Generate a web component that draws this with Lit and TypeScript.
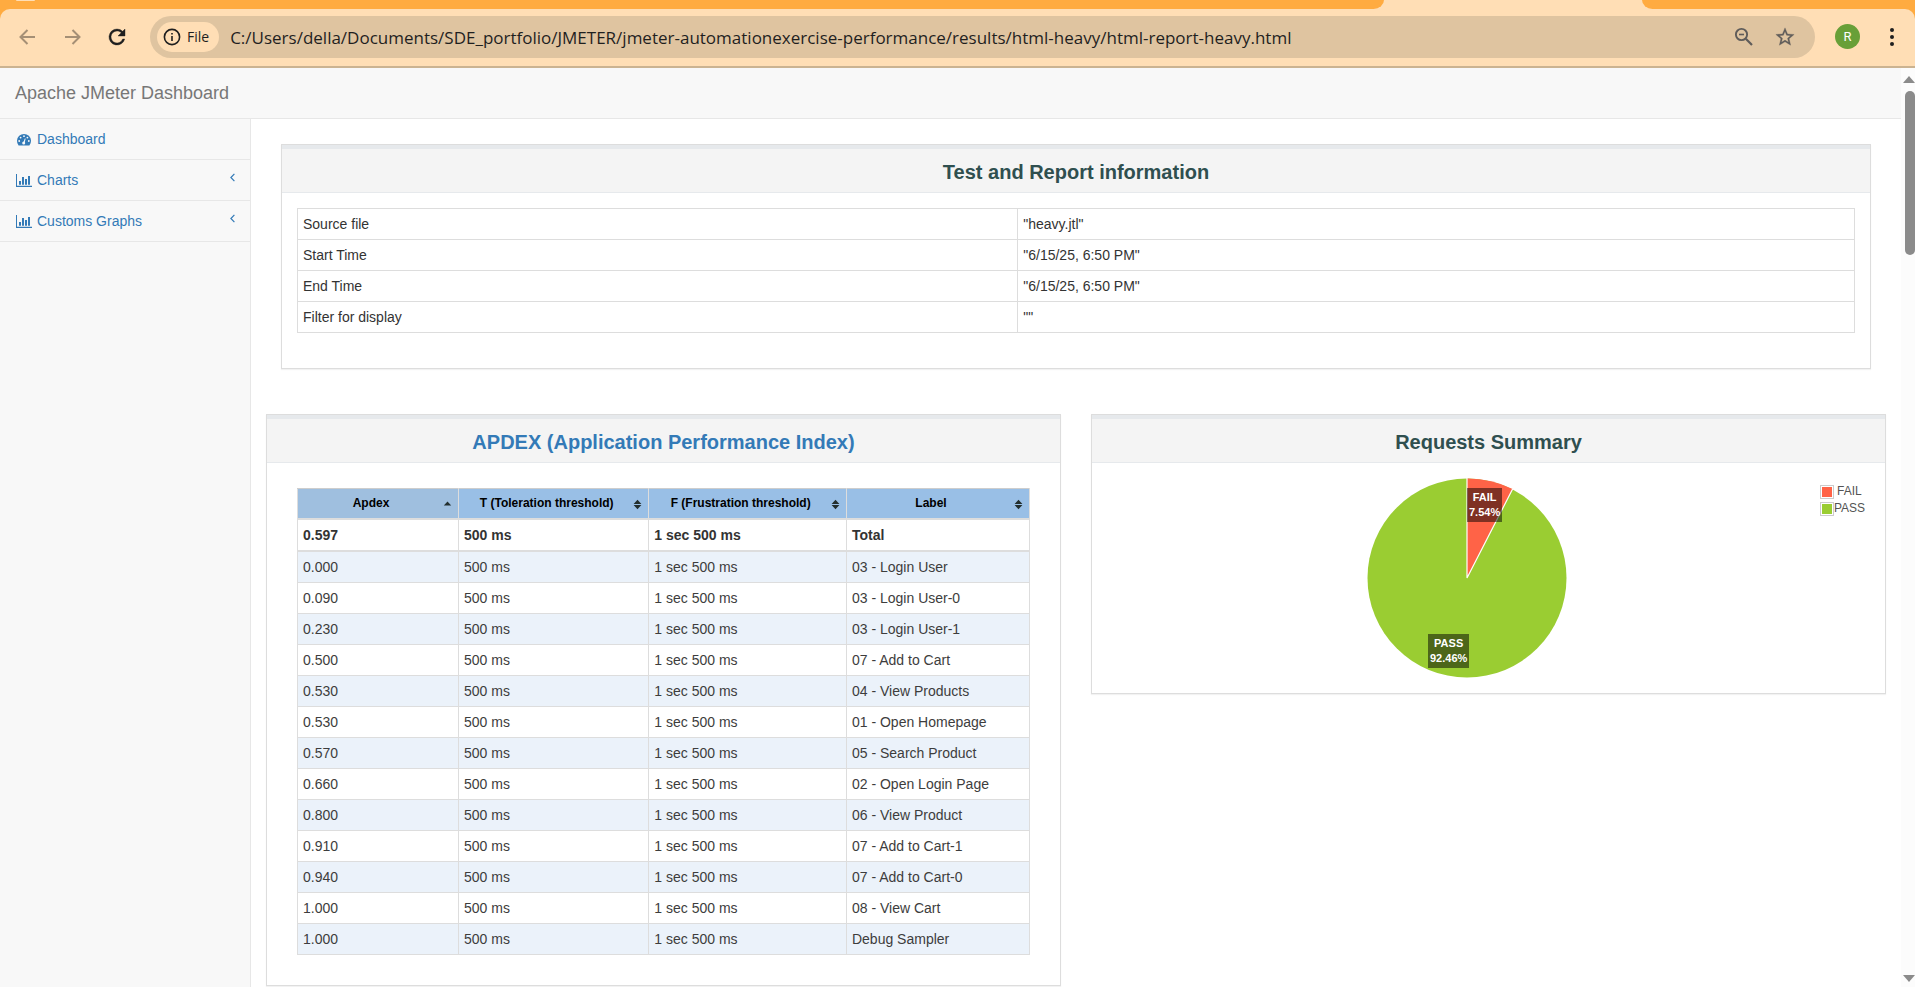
import { LitElement, html, css, svg } from "lit";
import { customElement } from "lit/decorators.js";

const INFO: [string, string][] = [
  ["Source file", '"heavy.jtl"'],
  ["Start Time", '"6/15/25, 6:50 PM"'],
  ["End Time", '"6/15/25, 6:50 PM"'],
  ["Filter for display", '""'],
];

const APDEX: [string, string][] = [
  ["0.000", "03 - Login User"],
  ["0.090", "03 - Login User-0"],
  ["0.230", "03 - Login User-1"],
  ["0.500", "07 - Add to Cart"],
  ["0.530", "04 - View Products"],
  ["0.530", "01 - Open Homepage"],
  ["0.570", "05 - Search Product"],
  ["0.660", "02 - Open Login Page"],
  ["0.800", "06 - View Product"],
  ["0.910", "07 - Add to Cart-1"],
  ["0.940", "07 - Add to Cart-0"],
  ["1.000", "08 - View Cart"],
  ["1.000", "Debug Sampler"],
];

const FAIL_SHARE = 0.0754;

@customElement("browser-toolbar")
class BrowserToolbar extends LitElement {
  static styles = css`
    :host {
      display: block;
      flex: none;
      font-family: "Open Sans", "Noto Sans", sans-serif;
      color: #1f1f1f;
    }
    .tabs {
      display: flex;
      height: 9px;
      background: #ffdeb5;
    }
    .strip {
      background: #ffab40;
    }
    .strip.left {
      flex: 1380;
      padding-left: 16px;
      border-bottom-right-radius: 14px 12px;
    }
    .search {
      width: 19px;
      height: 1px;
      border-radius: 0 0 2px 2px;
      background: #ffdeb5;
    }
    .strip.tab {
      flex: 260;
      background: none;
    }
    .strip.right {
      flex: 275;
      border-bottom-left-radius: 14px 12px;
    }
    .under {
      background: #ffab40;
    }
    .bar {
      display: flex;
      align-items: center;
      height: 57px;
      padding: 0 18px 2px 15px;
      box-sizing: border-box;
      border-radius: 10px 10px 0 0;
      background: #ffdeb5;
    }
    .line {
      height: 2px;
      background: #cbb391;
    }
    button {
      display: flex;
      align-items: center;
      justify-content: center;
      border: 0;
      padding: 0;
      background: none;
      color: inherit;
      font: inherit;
    }
    .nav {
      width: 24px;
      height: 24px;
      margin-right: 21px;
    }
    .dim {
      color: #a58f75;
    }
    .omni {
      display: flex;
      align-items: center;
      flex: 1;
      height: 42px;
      padding: 0 19px 0 7px;
      box-sizing: border-box;
      border-radius: 21px;
      background: #dfc4a0;
    }
    .chip {
      gap: 6px;
      height: 30px;
      padding: 0 10px 0 6px;
      border-radius: 15px;
      background: #ffdeb5;
      font-size: 14px;
      font-weight: 500;
    }
    .url {
      flex: 1;
      min-width: 0;
      margin-left: 11px;
      padding: 2px 0 0;
      border: 0;
      outline: 0;
      background: none;
      color: #1f1f1f;
      font: 17px/24px "Open Sans", "Noto Sans", sans-serif;
    }
    .act {
      width: 22px;
      height: 22px;
      margin-left: 19px;
      color: #5f5c5a;
    }
    .avatar {
      width: 25px;
      height: 25px;
      margin-left: 20px;
      border-radius: 50%;
      background: #689f38;
      color: #fff;
      font: 13px/25px Roboto, sans-serif;
    }
    .menu {
      width: 10px;
      height: 24px;
      margin-left: 27px;
    }
  `;

  render() {
    return html`
      <div class="tabs">
        <div class="strip left"><div class="search"></div></div>
        <div class="strip tab"></div>
        <div class="strip right"></div>
      </div>
      <div class="under">
        <div class="bar">
          <button class="nav dim" aria-label="Back">
            <svg width="24" height="24" viewBox="0 0 24 24" fill="none" stroke="currentColor" stroke-width="2">
              <path d="M20 12H6M12.5 5l-7 7 7 7" />
            </svg>
          </button>
          <button class="nav dim" aria-label="Forward">
            <svg width="24" height="24" viewBox="0 0 24 24" fill="none" stroke="currentColor" stroke-width="2">
              <path d="M5 12h14M12.5 5l7 7-7 7" />
            </svg>
          </button>
          <button class="nav" aria-label="Reload">
            <svg width="24" height="24" viewBox="0 0 24 24" fill="currentColor" stroke="currentColor" stroke-width="0.4">
              <path d="M17.65 6.35A7.95 7.95 0 0 0 12 4a8 8 0 1 0 7.73 10h-2.08A6 6 0 1 1 12 6c1.66 0 3.14.69 4.22 1.78L13 11h7V4z" />
            </svg>
          </button>
          <div class="omni">
            <button class="chip">
              <svg width="18" height="18" viewBox="0 0 18 18" fill="none" stroke="currentColor">
                <circle cx="9" cy="9" r="7.6" stroke-width="1.6" />
                <path d="M9 8v5M9 5v1.6" stroke-width="1.6" />
              </svg>
              File
            </button>
            <input class="url" type="text" aria-label="Address"
              value="C:/Users/della/Documents/SDE_portfolio/JMETER/jmeter-automationexercise-performance/results/html-heavy/html-report-heavy.html" />
            <button class="act" aria-label="Zoom">
              <svg width="22" height="22" viewBox="0 0 22 22" fill="none" stroke="currentColor">
                <circle cx="8.5" cy="8.5" r="5.6" stroke-width="1.9" />
                <path d="M12.8 12.8l6.2 6.2" stroke-width="2.2" />
                <path d="M6 8.5h5" stroke-width="1.6" />
              </svg>
            </button>
            <button class="act" aria-label="Bookmark">
              <svg width="22" height="22" viewBox="0 0 24 24" fill="currentColor" stroke="currentColor" stroke-width="0.3">
                <path d="M22 9.24l-7.19-.62L12 2 9.19 8.63 2 9.24l5.46 4.73L5.82 21 12 17.27 18.18 21l-1.63-7.03L22 9.24zM12 15.4l-3.76 2.27 1-4.28-3.32-2.88 4.38-.38L12 6.1l1.71 4.04 4.38.38-3.32 2.88 1 4.28L12 15.4z" />
              </svg>
            </button>
          </div>
          <button class="avatar" aria-label="Profile">R</button>
          <button class="menu" aria-label="Menu">
            <svg width="10" height="24" viewBox="0 0 10 24" fill="currentColor">
              <circle cx="5" cy="5" r="2" /><circle cx="5" cy="12" r="2" /><circle cx="5" cy="19" r="2" />
            </svg>
          </button>
        </div>
      </div>
      <div class="line"></div>
    `;
  }
}

@customElement("side-nav")
class SideNav extends LitElement {
  static styles = css`
    :host {
      display: block;
      flex: none;
      width: 250px;
      border-right: 1px solid #e7e7e7;
      background: #f8f8f8;
    }
    ul {
      margin: 0;
      padding: 0;
      list-style: none;
    }
    li {
      border-bottom: 1px solid #e7e7e7;
    }
    a {
      display: flex;
      align-items: center;
      gap: 5px;
      padding: 10px 15px;
      color: #337ab7;
      text-decoration: none;
    }
    .label {
      flex: 1;
    }
    .arrow {
      margin-top: -6px;
    }
  `;

  private chart() {
    return html`<svg width="17" height="14" viewBox="0 0 17 14" fill="currentColor">
      <path d="M1 1h1v11.8h15V14H1zM4 8h2v3.8H4zM7 4h2v7.8H7zM10 6h2v5.8h-2zM13 3h2v8.8h-2z" />
    </svg>`;
  }

  private arrow() {
    return html`<svg class="arrow" width="5" height="9" viewBox="0 0 5 9" fill="none" stroke="currentColor" stroke-width="1.2">
      <path d="M4.4.8L.9 4.5l3.5 3.7" />
    </svg>`;
  }

  render() {
    return html`<nav>
      <ul>
        <li>
          <a href="#dashboard">
            <svg width="17" height="14" viewBox="0 0 17 14">
              <path fill="currentColor" d="M3.6 13.4a7 7 0 1 1 10.8 0z" />
              <g fill="#f8f8f8">
                <circle cx="4.2" cy="9" r="0.9" /><circle cx="5.6" cy="5.6" r="0.9" /><circle cx="9" cy="4.2" r="0.9" />
                <circle cx="12.4" cy="5.6" r="0.9" /><circle cx="13.8" cy="9" r="0.9" /><circle cx="8.7" cy="11" r="1.5" />
                <path d="M8.4 10.4L9.8 6.4l.9.2-1.1 4.3z" />
              </g>
            </svg>
            <span class="label">Dashboard</span>
          </a>
        </li>
        <li><a href="#charts">${this.chart()}<span class="label">Charts</span>${this.arrow()}</a></li>
        <li><a href="#custom">${this.chart()}<span class="label">Customs Graphs</span>${this.arrow()}</a></li>
      </ul>
    </nav>`;
  }
}

@customElement("report-panel")
class ReportPanel extends LitElement {
  static properties = { heading: {}, href: {} };
  declare heading: string;
  declare href: string;

  static styles = css`
    :host {
      display: block;
      border: 1px solid #ddd;
      background: #fff;
      box-shadow: 0 1px 1px rgba(0, 0, 0, 0.05);
    }
    header {
      padding: 12px 15px 8px;
      border-top: 4px solid #e6e9ec;
      border-bottom: 1px solid #e6e9ec;
      background: #f4f4f4;
    }
    h2 {
      margin: 0;
      color: #2f4f4f;
      font-size: 20px;
      line-height: 23px;
      text-align: center;
    }
    a {
      color: #337ab7;
      text-decoration: none;
    }
    .body {
      padding: 15px;
    }
  `;

  render() {
    return html`
      <header>
        <h2>${this.href ? html`<a href=${this.href}>${this.heading}</a>` : this.heading}</h2>
      </header>
      <div class="body"><slot></slot></div>
    `;
  }
}

@customElement("pie-chart")
class PieChart extends LitElement {
  static styles = css`
    :host {
      display: block;
      position: relative;
      padding-right: 43px;
    }
    .pie {
      position: relative;
      width: 200px;
      height: 200px;
      margin: 0 auto;
    }
    .pie svg {
      display: block;
    }
    .tag {
      position: absolute;
      padding: 2px;
      background: rgba(0, 0, 0, 0.5);
      color: #fff;
      font-size: 11px;
      font-weight: bold;
      line-height: 15px;
      text-align: center;
    }
    .fail {
      left: 100px;
      top: 10px;
    }
    .pass {
      left: 61px;
      top: 156px;
    }
    .legend {
      position: absolute;
      top: 5px;
      right: 5px;
      display: grid;
      grid-template-columns: auto auto;
      align-items: center;
      justify-items: center;
      font-size: 12px;
      line-height: 17px;
      color: #545454;
    }
    .swatch {
      width: 10px;
      height: 10px;
      padding: 1px;
      border: 1px solid #ccc;
      background-clip: content-box;
    }
    .swatch.red {
      background-color: #ff6347;
    }
    .swatch.green {
      background-color: #9acd32;
    }
  `;

  render() {
    const angle = FAIL_SHARE * 2 * Math.PI;
    const x = 100 + 100 * Math.sin(angle);
    const y = 100 - 100 * Math.cos(angle);
    return html`
      <div class="pie">
        <svg width="200" height="200" viewBox="0 0 200 200" role="img" aria-label="Requests summary">
          ${svg`
            <circle cx="100" cy="100" r="99.5" fill="#9acd32" />
            <path d="M100 100V.5A99.5 99.5 0 0 1 ${x} ${y}z" fill="#ff6347" />
            <path d="M100 0V100L${x} ${y}" fill="none" stroke="#fff" stroke-width="1.2" />
          `}
        </svg>
        <div class="tag fail">FAIL<br />7.54%</div>
        <div class="tag pass">PASS<br />92.46%</div>
      </div>
      <div class="legend">
        <span class="swatch red"></span><span>FAIL</span>
        <span class="swatch green"></span><span>PASS</span>
      </div>
    `;
  }
}

@customElement("app-root")
class AppRoot extends LitElement {
  static styles = css`
    :host {
      display: flex;
      flex-direction: column;
      height: 100vh;
      overflow: hidden;
      background: #fff;
      color: #333;
      font: 14px/20px "Liberation Sans", Arial, sans-serif;
    }
    .window {
      flex: 1;
      display: flex;
      min-height: 0;
    }
    .page {
      flex: 1;
      display: flex;
      flex-direction: column;
      min-width: 0;
      overflow: hidden;
    }
    .navbar {
      flex: none;
      padding: 15px 15px 14px;
      border-bottom: 1px solid #e7e7e7;
      background: #f8f8f8;
    }
    .brand {
      display: block;
      color: #777;
      font-size: 18px;
      line-height: 21px;
      text-decoration: none;
    }
    .columns {
      flex: 1;
      display: flex;
      min-height: 0;
    }
    main {
      flex: 1;
      min-width: 0;
      padding: 25px 15px 0;
    }
    .info {
      margin: 0 15px 45px;
    }
    .row {
      display: grid;
      grid-template-columns: 1fr 1fr;
      align-items: start;
      gap: 30px;
    }
    table {
      width: 100%;
      border-collapse: collapse;
      border: 1px solid #ddd;
    }
    th,
    td {
      padding: 5px;
      border: 1px solid #ddd;
      text-align: left;
    }
    .facts {
      margin-bottom: 20px;
    }
    .scores {
      color: #3d3d3d;
    }
    .wrap {
      padding: 10px 15px 15px;
    }
    .scores thead th {
      padding: 4px 22px 4px 8px;
      border-top-color: #cdcdcd;
      border-bottom: 2px solid #ddd;
      background: #99bfe6;
      color: #000;
      font-size: 12px;
      line-height: 21px;
      text-align: center;
      position: relative;
    }
    .scores thead th.sorted {
      background: #9fbfdf;
    }
    .sort {
      position: absolute;
      right: 6px;
      top: 10px;
    }
    .total td {
      border-bottom: 2px solid #ddd;
      color: #333;
      font-weight: bold;
    }
    .scores .data tr:nth-child(odd) td {
      background: #ebf2fa;
    }
    .scroll {
      flex: none;
      width: 14px;
      display: flex;
      flex-direction: column;
      align-items: flex-end;
      padding: 8px 0 5px;
      box-sizing: border-box;
      overflow: hidden;
      background: #fcfcfc;
    }
    .thumb {
      flex: none;
      width: 10px;
      height: 164px;
      margin: 8px 0 auto;
      border-radius: 5px;
      background: #8b8b8b;
    }
  `;

  private sortIcon(sorted: boolean) {
    return html`<svg class="sort" width="9" height="11" viewBox="0 0 9 11" fill="#232f2f">
      <path d=${sorted ? "M4.5 2.4L8.2 6.4H.8z" : "M4.5.8L8.4 5H.6zM4.5 10.2L.6 6h7.8z"} />
    </svg>`;
  }

  render() {
    return html`
      <browser-toolbar></browser-toolbar>
      <div class="window">
        <div class="page">
          <div class="navbar"><a class="brand" href="#top">Apache JMeter Dashboard</a></div>
          <div class="columns">
            <side-nav></side-nav>
            <main>
              <report-panel class="info" .heading=${"Test and Report information"}>
                <table class="facts">
                  <tbody>
                    ${INFO.map(([k, v]) => html`<tr><td>${k}</td><td>${v}</td></tr>`)}
                  </tbody>
                </table>
              </report-panel>
              <div class="row">
                <report-panel .heading=${"APDEX (Application Performance Index)"} .href=${"#apdex"}>
                  <div class="wrap">
                    <table class="scores">
                      <colgroup>
                        <col style="width:22%" />
                        <col style="width:26%" />
                        <col style="width:27%" />
                        <col style="width:25%" />
                      </colgroup>
                      <thead>
                        <tr>
                          ${["Apdex", "T (Toleration threshold)", "F (Frustration threshold)", "Label"].map(
                            (t, i) => html`<th class=${i ? "" : "sorted"}>${t}${this.sortIcon(i === 0)}</th>`
                          )}
                        </tr>
                      </thead>
                      <tbody class="total">
                        <tr><td>0.597</td><td>500 ms</td><td>1 sec 500 ms</td><td>Total</td></tr>
                      </tbody>
                      <tbody class="data">
                        ${APDEX.map(
                          ([score, label]) =>
                            html`<tr><td>${score}</td><td>500 ms</td><td>1 sec 500 ms</td><td>${label}</td></tr>`
                        )}
                      </tbody>
                    </table>
                  </div>
                </report-panel>
                <report-panel .heading=${"Requests Summary"}>
                  <pie-chart></pie-chart>
                </report-panel>
              </div>
            </main>
          </div>
        </div>
        <div class="scroll">
          <svg width="12" height="7" viewBox="0 0 12 7" fill="#8b8b8b"><path d="M6 0l6 7H0z" /></svg>
          <div class="thumb"></div>
          <svg width="12" height="7" viewBox="0 0 12 7" fill="#8b8b8b"><path d="M6 7L0 0h12z" /></svg>
        </div>
      </div>
    `;
  }
}
